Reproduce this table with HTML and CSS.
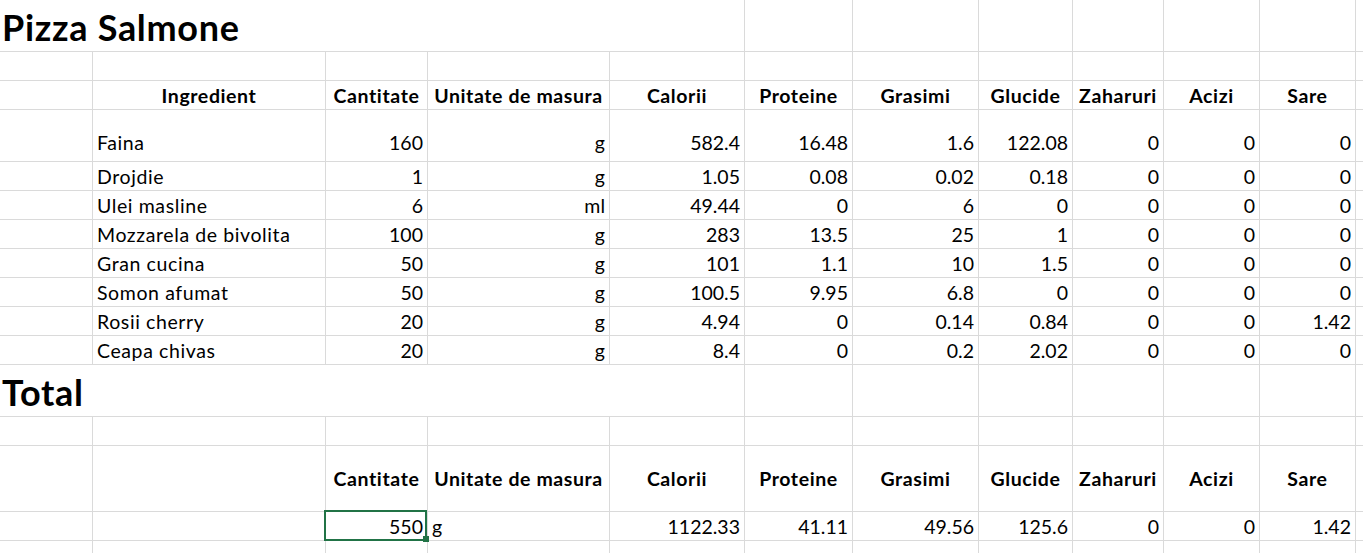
FILE: index.html
```html
<!DOCTYPE html>
<html>
<head>
<meta charset="utf-8">
<title>Pizza Salmone</title>
<link rel="stylesheet" href="styles.css">
</head>
<body>
<div class="sheet">
  <div class="row h-title">
    <div class="c title span4">Pizza Salmone</div>
    <div class="c"></div><div class="c"></div><div class="c"></div><div class="c"></div><div class="c"></div><div class="c"></div><div class="c"></div><div class="c"></div>
  </div>
  <div class="row h-std">
    <div class="c"></div><div class="c"></div><div class="c"></div><div class="c"></div><div class="c"></div><div class="c"></div><div class="c"></div><div class="c"></div><div class="c"></div><div class="c"></div><div class="c"></div><div class="c"></div>
  </div>
  <div class="row h-std head">
    <div class="c"></div>
    <div class="c ctr">Ingredient</div>
    <div class="c ctr">Cantitate</div>
    <div class="c ctr">Unitate de masura</div>
    <div class="c ctr">Calorii</div>
    <div class="c ctr">Proteine</div>
    <div class="c ctr">Grasimi</div>
    <div class="c ctr">Glucide</div>
    <div class="c ctr">Zaharuri</div>
    <div class="c ctr">Acizi</div>
    <div class="c ctr">Sare</div>
    <div class="c"></div>
  </div>
  <div class="row h-tall data">
    <div class="c"></div><div class="c">Faina</div><div class="c r">160</div><div class="c r">g</div><div class="c r">582.4</div><div class="c r">16.48</div><div class="c r">1.6</div><div class="c r">122.08</div><div class="c r">0</div><div class="c r">0</div><div class="c r">0</div><div class="c"></div>
  </div>
  <div class="row h-std data">
    <div class="c"></div><div class="c">Drojdie</div><div class="c r">1</div><div class="c r">g</div><div class="c r">1.05</div><div class="c r">0.08</div><div class="c r">0.02</div><div class="c r">0.18</div><div class="c r">0</div><div class="c r">0</div><div class="c r">0</div><div class="c"></div>
  </div>
  <div class="row h-std data">
    <div class="c"></div><div class="c">Ulei masline</div><div class="c r">6</div><div class="c r">ml</div><div class="c r">49.44</div><div class="c r">0</div><div class="c r">6</div><div class="c r">0</div><div class="c r">0</div><div class="c r">0</div><div class="c r">0</div><div class="c"></div>
  </div>
  <div class="row h-std data">
    <div class="c"></div><div class="c">Mozzarela de bivolita</div><div class="c r">100</div><div class="c r">g</div><div class="c r">283</div><div class="c r">13.5</div><div class="c r">25</div><div class="c r">1</div><div class="c r">0</div><div class="c r">0</div><div class="c r">0</div><div class="c"></div>
  </div>
  <div class="row h-std data">
    <div class="c"></div><div class="c">Gran cucina</div><div class="c r">50</div><div class="c r">g</div><div class="c r">101</div><div class="c r">1.1</div><div class="c r">10</div><div class="c r">1.5</div><div class="c r">0</div><div class="c r">0</div><div class="c r">0</div><div class="c"></div>
  </div>
  <div class="row h-std data">
    <div class="c"></div><div class="c">Somon afumat</div><div class="c r">50</div><div class="c r">g</div><div class="c r">100.5</div><div class="c r">9.95</div><div class="c r">6.8</div><div class="c r">0</div><div class="c r">0</div><div class="c r">0</div><div class="c r">0</div><div class="c"></div>
  </div>
  <div class="row h-std data">
    <div class="c"></div><div class="c">Rosii cherry</div><div class="c r">20</div><div class="c r">g</div><div class="c r">4.94</div><div class="c r">0</div><div class="c r">0.14</div><div class="c r">0.84</div><div class="c r">0</div><div class="c r">0</div><div class="c r">1.42</div><div class="c"></div>
  </div>
  <div class="row h-std data">
    <div class="c"></div><div class="c">Ceapa chivas</div><div class="c r">20</div><div class="c r">g</div><div class="c r">8.4</div><div class="c r">0</div><div class="c r">0.2</div><div class="c r">2.02</div><div class="c r">0</div><div class="c r">0</div><div class="c r">0</div><div class="c"></div>
  </div>
  <div class="row h-title">
    <div class="c title span4">Total</div>
    <div class="c"></div><div class="c"></div><div class="c"></div><div class="c"></div><div class="c"></div><div class="c"></div><div class="c"></div><div class="c"></div>
  </div>
  <div class="row h-std">
    <div class="c"></div><div class="c"></div><div class="c"></div><div class="c"></div><div class="c"></div><div class="c"></div><div class="c"></div><div class="c"></div><div class="c"></div><div class="c"></div><div class="c"></div><div class="c"></div>
  </div>
  <div class="row h-head head mid">
    <div class="c"></div>
    <div class="c"></div>
    <div class="c ctr">Cantitate</div>
    <div class="c ctr">Unitate de masura</div>
    <div class="c ctr">Calorii</div>
    <div class="c ctr">Proteine</div>
    <div class="c ctr">Grasimi</div>
    <div class="c ctr">Glucide</div>
    <div class="c ctr">Zaharuri</div>
    <div class="c ctr">Acizi</div>
    <div class="c ctr">Sare</div>
    <div class="c"></div>
  </div>
  <div class="row h-std data">
    <div class="c"></div><div class="c"></div><div class="c r selected">550</div><div class="c">g</div><div class="c r">1122.33</div><div class="c r">41.11</div><div class="c r">49.56</div><div class="c r">125.6</div><div class="c r">0</div><div class="c r">0</div><div class="c r">1.42</div><div class="c"></div>
  </div>
  <div class="row h-std">
    <div class="c"></div><div class="c"></div><div class="c"></div><div class="c"></div><div class="c"></div><div class="c"></div><div class="c"></div><div class="c"></div><div class="c"></div><div class="c"></div><div class="c"></div><div class="c"></div>
  </div>
</div>
</body>
</html>
```

FILE: styles.css
```css
html, body {
  margin: 0;
  padding: 0;
  background: #ffffff;
  overflow: hidden;
}

.sheet {
  width: 1420px;
  font-family: Lato, "Noto Sans", sans-serif;
  font-size: 19.5px;
  letter-spacing: 0.6px;
  color: #000000;
}

.row {
  display: grid;
  grid-template-columns: 93px 233px 102px 182px 135px 108px 126px 94px 91px 96px 96px 64px;
}

.h-title { height: 52px; }
.h-std { height: 29px; }
.h-tall { height: 52px; }
.h-head { height: 66px; }

.c {
  box-sizing: border-box;
  border-right: 1px solid #dadada;
  border-bottom: 1px solid #dadada;
  display: flex;
  align-items: flex-end;
  padding: 0 4px 3px 4px;
  line-height: 20px;
  white-space: nowrap;
  min-width: 0;
}

.span4 { grid-column: span 4; border-right: none; }

.title {
  font-weight: 700;
  font-size: 36px;
  letter-spacing: 0.7px;
  line-height: 40px;
  padding: 0 0 4px 2px;
}

.h-tall .c { padding-bottom: 8px; }

.head .c { font-weight: 700; }
.mid .c { align-items: center; padding-bottom: 0; }

.r { justify-content: flex-end; letter-spacing: 0; }
.ctr { justify-content: center; padding-left: 0; padding-right: 0; }

.selected { position: relative; }
.selected::after {
  content: "";
  position: absolute;
  left: -2px;
  top: -2px;
  right: 0;
  bottom: -1px;
  border: 2px solid #217346;
}
.selected::before {
  content: "";
  position: absolute;
  right: -2px;
  bottom: -2px;
  width: 6px;
  height: 6px;
  background: #217346;
  z-index: 1;
}
```
